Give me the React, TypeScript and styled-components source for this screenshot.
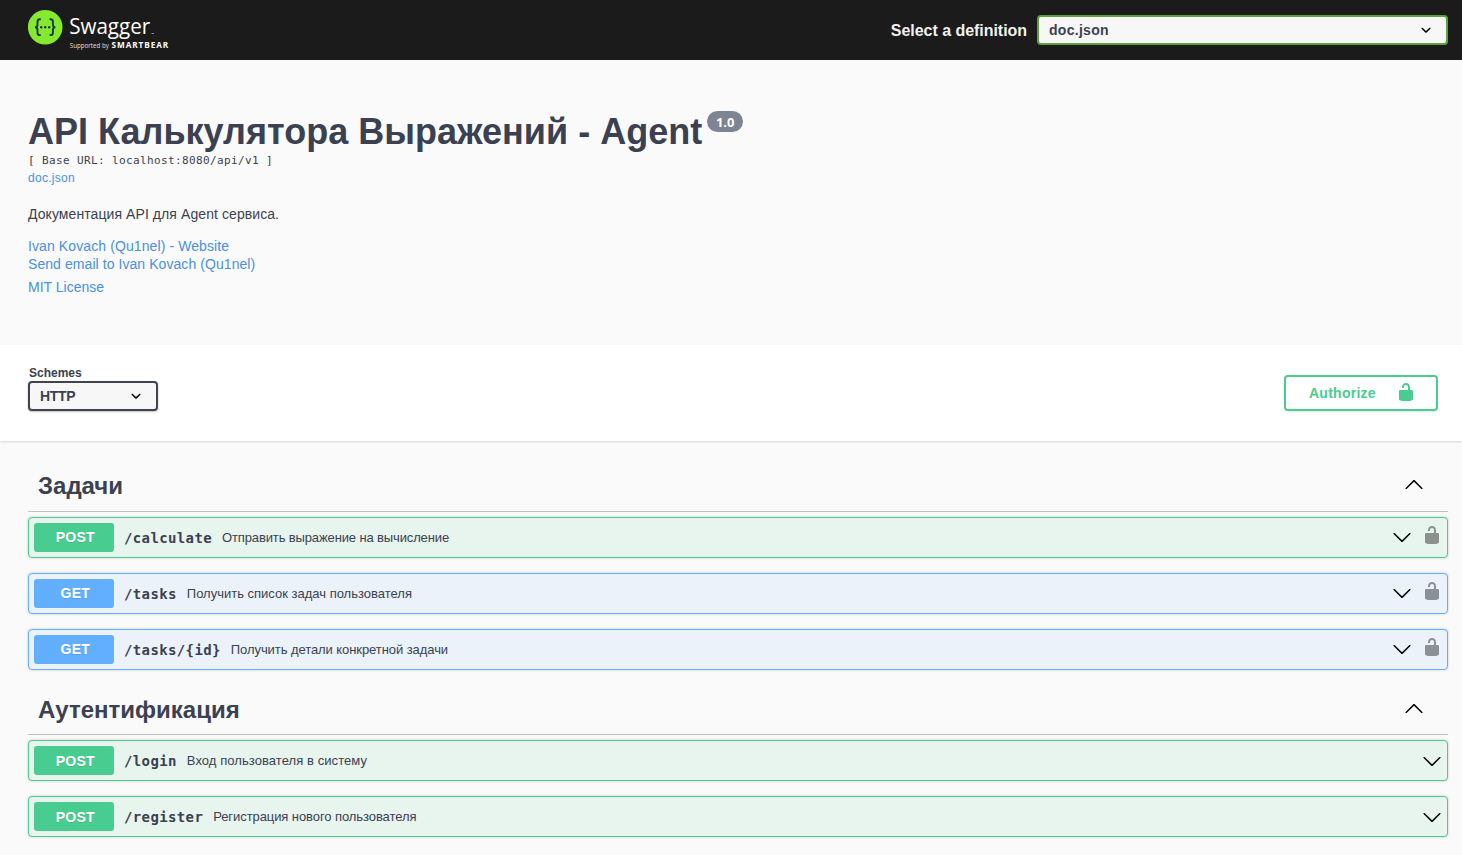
import React from 'react';
import styled, { createGlobalStyle } from 'styled-components';

const GlobalStyle = createGlobalStyle`
  *, *::before, *::after { box-sizing: border-box; }
  body {
    margin: 0;
    background: #fafafa;
    color: #3b4151;
    font-family: "Liberation Sans", Arial, sans-serif;
    overflow: hidden;
  }
`;

const Topbar = styled.header`
  display: flex;
  align-items: center;
  justify-content: space-between;
  height: 60px;
  padding: 0 14px 0 28px;
  background: #1b1b1b;
`;

const Logo = styled.svg`
  display: block;
  width: 150px;
  height: 60px;
`;

const DefinitionLabel = styled.label`
  display: flex;
  align-items: center;
  gap: 10px;
  color: #f0f0f0;
  font-size: 16px;
  font-weight: 700;
`;

const DefinitionText = styled.span`
  padding-top: 2px;
  letter-spacing: -0.04px;
`;

const SelectBox = styled.div<{ $width: number; $border: string; $shadow?: boolean; $track?: number }>`
  display: flex;
  align-items: center;
  justify-content: space-between;
  width: ${(p) => p.$width}px;
  height: 30px;
  padding: 0 10px;
  border: 2px solid ${(p) => p.$border};
  border-radius: 4px;
  background: #f7f7f7;
  box-shadow: ${(p) => (p.$shadow ? '0 1px 2px rgba(0, 0, 0, 0.25)' : 'none')};
  color: #3b4151;
  font-size: 14px;
  font-weight: 700;
  letter-spacing: ${(p) => p.$track ?? 0}px;
`;

const Icon = styled.svg<{ $color?: string; $opacity?: number }>`
  display: block;
  flex: none;
  width: 20px;
  height: 20px;
  fill: ${(p) => p.$color ?? '#000'};
  opacity: ${(p) => p.$opacity ?? 1};
`;

const Info = styled.section`
  height: 285px;
  padding: 51px 28px 0;
`;

const TitleRow = styled.div`
  display: flex;
  align-items: flex-start;
  gap: 5px;
`;

const Title = styled.h1`
  margin: 0;
  font-size: 36px;
  font-weight: 700;
  letter-spacing: 0.01px;
  line-height: 42px;
  white-space: nowrap;
`;

const Version = styled.span`
  display: flex;
  align-items: center;
  justify-content: center;
  width: 36px;
  height: 21px;
  border-radius: 57px;
  background: #7d8492;
  color: #fff;
  font-family: "Open Sans", sans-serif;
  font-size: 13px;
  font-weight: 700;
`;

const BaseUrl = styled.pre`
  margin: 0;
  font-family: "DejaVu Sans Mono", monospace;
  font-size: 11px;
  letter-spacing: 0.378px;
  line-height: 16px;
`;

const Link = styled.a<{ $size?: number; $top?: number; $track?: number }>`
  display: block;
  width: max-content;
  margin-top: ${(p) => p.$top ?? 0}px;
  color: #4990e2;
  font-size: ${(p) => p.$size ?? 14}px;
  letter-spacing: ${(p) => p.$track ?? 0}px;
  line-height: 18px;
`;

const Description = styled.p`
  margin: 18px 0 14px;
  font-size: 14px;
  letter-spacing: 0.08px;
  line-height: 18px;
`;

const SchemeBar = styled.section`
  display: flex;
  align-items: flex-start;
  justify-content: space-between;
  height: 96px;
  padding: 20px 24px 0 28px;
  background: #fff;
  box-shadow: 0 1px 2px rgba(0, 0, 0, 0.15);
`;

const Schemes = styled.div`
  display: flex;
  flex-direction: column;
`;

const SchemesTitle = styled.span`
  padding-left: 1px;
  font-size: 12px;
  font-weight: 700;
  line-height: 16px;
`;

const AuthorizeButton = styled.button`
  display: flex;
  align-items: center;
  justify-content: space-between;
  width: 154px;
  height: 36px;
  margin-top: 10px;
  padding: 0 20px 0 23px;
  border: 2px solid #49cc90;
  border-radius: 4px;
  background: transparent;
  box-shadow: 0 1px 2px rgba(0, 0, 0, 0.1);
  color: #49cc90;
  font: 700 14px "Liberation Sans", Arial, sans-serif;
  letter-spacing: 0.25px;

  svg { margin-top: -2px; }
`;

const Groups = styled.main`
  padding: 20.6px 14px 0 28px;
`;

const Group = styled.section``;

const GroupHeader = styled.div`
  display: flex;
  align-items: center;
  justify-content: space-between;
  height: 50.4px;
  margin-bottom: 5px;
  padding: 0 24px 0.2px 10px;
  border-bottom: 1px solid rgba(59, 65, 81, 0.3);

  svg { margin-top: -4px; }
`;

const GroupTitle = styled.h2`
  margin: 0;
  font-size: 24px;
  font-weight: 700;
  line-height: 28px;
`;

const methods = {
  POST: { main: '#49cc90', background: '#e8f4ee' },
  GET: { main: '#61affe', background: '#ebf2fa' },
};
type Method = keyof typeof methods;

const Operation = styled.div<{ $method: Method }>`
  display: flex;
  align-items: center;
  height: 41px;
  margin-bottom: 15px;
  padding: 5px;
  border: 1px solid ${(p) => methods[p.$method].main};
  border-radius: 4px;
  background: ${(p) => methods[p.$method].background};
  box-shadow: 0 0 3px rgba(0, 0, 0, 0.19);
`;

const MethodBadge = styled.span<{ $method: Method }>`
  width: 80px;
  height: 29px;
  padding: 0.3px 0 0 2.6px;
  border-radius: 3px;
  background: ${(p) => methods[p.$method].main};
  color: #fff;
  font-size: 14px;
  font-weight: 700;
  letter-spacing: 0.25px;
  line-height: 29px;
  text-align: center;
  text-shadow: 0 1px 0 rgba(0, 0, 0, 0.1);
`;

const Path = styled.span`
  margin: 2px 10px 0;
  font-family: "DejaVu Sans Mono", monospace;
  font-size: 14px;
  font-weight: 700;
  letter-spacing: 0.37px;
  line-height: 17px;
`;

const Summary = styled.span<{ $track: number }>`
  flex: 1;
  font-size: 13px;
  letter-spacing: ${(p) => p.$track}px;
`;

const Controls = styled.div<{ $secured?: boolean }>`
  display: flex;
  align-items: center;
  gap: 10px;
  margin-bottom: ${(p) => (p.$secured ? 1 : 0)}px;

  svg + svg { margin-top: -4px; }
`;

const SelectArrow = () => (
  <Icon viewBox="0 0 20 20">
    <path d="M13.418 7.859c.271-.268.709-.268.978 0 .27.268.272.701 0 .969l-3.908 3.83c-.27.268-.707.268-.979 0l-3.908-3.83c-.27-.267-.27-.701 0-.969.271-.268.709-.268.978 0L10 11l3.418-3.141z" />
  </Icon>
);

const ArrowUp = () => (
  <Icon viewBox="0 0 20 20">
    <path d="M17.418 14.908c.272.268.709.268.979 0s.271-.701 0-.969l-7.908-7.83c-.27-.268-.707-.268-.979 0l-7.908 7.83c-.27.268-.27.701 0 .969.271.268.709.268.979 0L10 7.767l7.418 7.141z" />
  </Icon>
);

const ArrowDown = () => (
  <Icon viewBox="0 0 20 20">
    <path d="M17.418 6.109c.272-.268.709-.268.979 0s.271.701 0 .969l-7.908 7.83c-.27.268-.707.268-.979 0l-7.908-7.83c-.27-.268-.27-.701 0-.969.271-.268.709-.268.979 0L10 13.25l7.418-7.141z" />
  </Icon>
);

const Unlocked = ({ color, opacity }: { color?: string; opacity?: number }) => (
  <Icon viewBox="0 0 20 20" $color={color} $opacity={opacity}>
    <path d="M15.8 8H14V5.6C14 2.703 12.665 1 10 1 7.334 1 6 2.703 6 5.6V6h2v-.801C8 3.754 8.797 3 10 3c1.203 0 2 .754 2 2.199V8H4c-.553 0-1 .646-1 1.199V17c0 .549.428 1.139.951 1.307l1.197.387C5.672 18.861 6.55 19 7.1 19h5.8c.549 0 1.428-.139 1.951-.307l1.196-.387c.524-.167.953-.757.953-1.306V9.199C17 8.646 16.352 8 15.8 8z" />
  </Icon>
);

const SwaggerLogo = () => (
  <Logo viewBox="0 0 150 60">
    <circle cx="17.2" cy="27.2" r="17.3" fill="#85ea2d" />
    <g fill="none" stroke="#173647" strokeWidth="1.9">
      <path d="M12.8 19.3h-.9c-1.7 0-2.4.8-2.4 2.4v2.7c0 1.7-.7 2.8-2.4 2.9 1.7.1 2.4 1.2 2.4 2.9v2.5c0 1.6.7 2.4 2.4 2.4h.9" />
      <path d="M21.6 19.3h.9c1.7 0 2.4.8 2.4 2.4v2.7c0 1.7.7 2.8 2.4 2.9-1.7.1-2.4 1.2-2.4 2.9v2.5c0 1.6-.7 2.4-2.4 2.4h-.9" />
    </g>
    <g fill="#173647">
      <circle cx="13.2" cy="27.3" r="1.2" />
      <circle cx="17.2" cy="27.3" r="1.2" />
      <circle cx="21.2" cy="27.3" r="1.2" />
    </g>
    <g fill="#fff" fontFamily="Open Sans, sans-serif">
      <text x="41.2" y="34.4" fontSize="21.8" textLength="81" lengthAdjust="spacingAndGlyphs">Swagger</text>
      <rect x="123.5" y="33.2" width="2.5" height="0.8" opacity="0.6" />
      <text x="41.8" y="48" fontSize="6.3" textLength="39" lengthAdjust="spacingAndGlyphs" opacity="0.85">Supported by</text>
      <text x="83.6" y="48.1" fontSize="8.2" fontWeight="700" textLength="56.5">SMARTBEAR</text>
    </g>
  </Logo>
);

interface OperationData {
  method: Method;
  path: string;
  summary: string;
  secured?: boolean;
  track?: number;
}

const groups: { title: string; operations: OperationData[] }[] = [
  {
    title: 'Задачи',
    operations: [
      { method: 'POST', path: '/calculate', summary: 'Отправить выражение на вычисление', secured: true, track: -0.13 },
      { method: 'GET', path: '/tasks', summary: 'Получить список задач пользователя', secured: true },
      { method: 'GET', path: '/tasks/{id}', summary: 'Получить детали конкретной задачи', secured: true, track: -0.07 },
    ],
  },
  {
    title: 'Аутентификация',
    operations: [
      { method: 'POST', path: '/login', summary: 'Вход пользователя в систему', track: 0.07 },
      { method: 'POST', path: '/register', summary: 'Регистрация нового пользователя', track: -0.08 },
    ],
  },
];

export default function App() {
  return (
    <>
      <GlobalStyle />
      <Topbar>
        <SwaggerLogo />
        <DefinitionLabel>
          <DefinitionText>Select a definition</DefinitionText>
          <SelectBox $width={411} $border="#62a03f" $track={0.28}>
            <span>doc.json</span>
            <SelectArrow />
          </SelectBox>
        </DefinitionLabel>
      </Topbar>
      <Info>
        <TitleRow>
          <Title>API Калькулятора Выражений - Agent</Title>
          <Version>1.0</Version>
        </TitleRow>
        <BaseUrl>[ Base URL: localhost:8080/api/v1 ]</BaseUrl>
        <Link $size={12} $track={0.27}>doc.json</Link>
        <Description>Документация API для Agent сервиса.</Description>
        <Link $track={0.1}>Ivan Kovach (Qu1nel) - Website</Link>
        <Link $track={0.07}>Send email to Ivan Kovach (Qu1nel)</Link>
        <Link $top={5}>MIT License</Link>
      </Info>
      <SchemeBar>
        <Schemes>
          <SchemesTitle>Schemes</SchemesTitle>
          <SelectBox $width={130} $border="#41444e" $shadow $track={-0.3}>
            <span>HTTP</span>
            <SelectArrow />
          </SelectBox>
        </Schemes>
        <AuthorizeButton>
          <span>Authorize</span>
          <Unlocked color="#49cc90" />
        </AuthorizeButton>
      </SchemeBar>
      <Groups>
        {groups.map((group) => (
          <Group key={group.title}>
            <GroupHeader>
              <GroupTitle>{group.title}</GroupTitle>
              <ArrowUp />
            </GroupHeader>
            {group.operations.map((op) => (
              <Operation key={op.path} $method={op.method}>
                <MethodBadge $method={op.method}>{op.method}</MethodBadge>
                <Path>{op.path}</Path>
                <Summary $track={op.track ?? 0}>{op.summary}</Summary>
                <Controls $secured={op.secured}>
                  <ArrowDown />
                  {op.secured && <Unlocked opacity={0.4} />}
                </Controls>
              </Operation>
            ))}
          </Group>
        ))}
      </Groups>
    </>
  );
}
